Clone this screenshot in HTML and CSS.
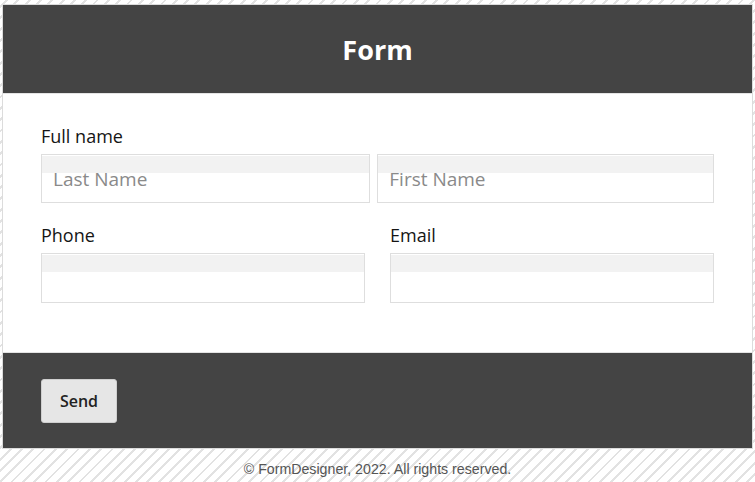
FILE: index.html
```html
<!DOCTYPE html>
<html lang="en">
<head>
    <meta charset="UTF-8">
    <meta name="viewport" content="width=device-width, initial-scale=1.0">
    <title>Form</title>
    <link rel="stylesheet" href="styles.css">
</head>
<body>
    <div class="form-box">
        <div class="form-header">
            <h1>Form</h1>
        </div>

        <div class="form-body">
            <div class="field">
                <label>Full name</label>
                <div class="row name-row">
                    <input type="text" placeholder="Last Name">
                    <input type="text" placeholder="First Name">
                </div>
            </div>

            <div class="row pair-row">
                <div class="field">
                    <label>Phone</label>
                    <input type="text">
                </div>
                <div class="field">
                    <label>Email</label>
                    <input type="text">
                </div>
            </div>
        </div>

        <div class="form-footer">
            <button class="send-btn">Send</button>
        </div>
    </div>

    <p class="copyright">&copy; FormDesigner, 2022. All rights reserved.</p>
</body>
</html>
```

FILE: styles.css
```css
body {
    margin: 0;
    padding: 4px 2px 0;
    font-family: "Open Sans", sans-serif;
    background-color: #fff;
    background-image: repeating-linear-gradient(135deg, #fff 0, #fff 4px, #e2e2e2 4px, #e2e2e2 6px, #fff 6px, #fff 8px);
    min-height: 100vh;
    box-sizing: border-box;
}

.form-box {
    border: 1px solid #dcdcdc;
    background: #fff;
}

.form-header {
    background-color: #444;
    height: 88px;
    display: flex;
    align-items: center;
    justify-content: center;
    border-bottom: 1px solid #e4e4e4;
}

.form-header h1 {
    margin: 0;
    color: #fff;
    font-size: 27px;
    font-weight: bold;
}

.form-body {
    padding: 30px 38px 49px;
    border-bottom: 1px solid #e4e4e4;
}

.field label {
    display: block;
    font-size: 18px;
    color: #151515;
    line-height: 24px;
    margin-bottom: 6px;
}

.row {
    display: flex;
}

.name-row {
    gap: 7px;
}

.name-row input:first-child {
    flex: 329;
}

.name-row input:last-child {
    flex: 337;
}

.pair-row {
    gap: 25px;
    margin-top: 20px;
}

.pair-row .field {
    flex: 1;
}

input[type="text"] {
    display: block;
    width: 100%;
    box-sizing: border-box;
    height: 50px;
    border: 1px solid #dedede;
    padding: 0 11px;
    font-family: inherit;
    font-size: 19px;
    color: #333;
    background: linear-gradient(#fff 1px, #f2f2f2 1px, #f2f2f2 18px, #fff 18px);
    outline: none;
}

.name-row input[type="text"] {
    height: 49px;
}

input::placeholder {
    color: #8a8a8a;
}

.form-footer {
    background-color: #444;
    padding: 26px 38px 25px;
}

.send-btn {
    background-color: #e6e6e6;
    border: 1px solid #cfcfcf;
    border-radius: 3px;
    width: 76px;
    height: 44px;
    font-family: inherit;
    font-size: 16px;
    font-weight: 600;
    color: #222;
    cursor: pointer;
}

.copyright {
    margin: 12px 0 0;
    text-align: center;
    font-family: "Liberation Sans", Arial, sans-serif;
    font-size: 14.2px;
    color: #555;
}
```
